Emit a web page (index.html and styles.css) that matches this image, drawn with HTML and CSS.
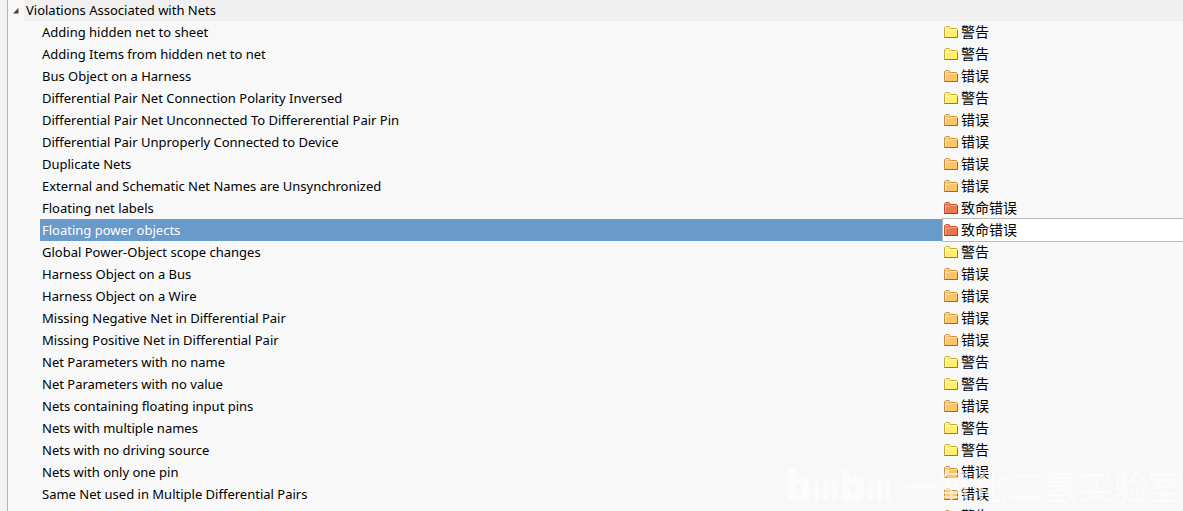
FILE: index.html
```html
<!DOCTYPE html>
<html lang="zh-CN">
<head>
    <meta charset="UTF-8">
    <meta name="viewport" content="width=device-width, initial-scale=1.0">
    <title>Error Reporting</title>
    <link rel="stylesheet" href="styles.css">
</head>
<body>
    <svg class="defs" width="0" height="0">
        <symbol id="folder" viewBox="0 0 14 12">
            <path class="body" d="M.5 11.500v-9.500l1.500-1.500h3l1.500 2h6l1 1v8z"/>
            <path class="shine" d="M1.500 10.500v-8M2 1.500h3M1.500 4.500h4l1-1h6"/>
            <path class="edge" d="M.5 11.500h13v-7"/>
        </symbol>
    </svg>
    <div class="panel">
        <table class="rules">
            <colgroup>
                <col class="col-toggle">
                <col>
                <col class="col-value">
            </colgroup>
            <thead>
                <tr>
                    <th class="toggle"><button type="button" aria-label="Collapse"><svg width="6" height="6" viewBox="0 0 6 6"><path d="M5.500 0v5.500h-5.500z"/></svg></button></th>
                    <th class="group" colspan="2">Violations Associated with Nets</th>
                </tr>
            </thead>
            <tbody id="list"></tbody>
        </table>
    </div>
    <div class="watermark">
        <span class="logo"><b>b</b>ili<b>b</b>ili</span>
        <span class="author">一氧化二氢实验室</span>
    </div>
    <script src="script.js"></script>
</body>
</html>
```
FILE: styles.css
```css
body{
    margin: 0;
    height: 100vh;
    overflow: hidden;
    background: #f3f3f3;
    color: #000;
    font: 13px/22px "Noto Sans", "Noto Sans CJK SC", sans-serif;
}
.defs{
    position: absolute;
}
.panel{
    min-height: 100vh;
    margin-left: 7px;
    border-left: 1px solid #b4b4b4;
    background: #f8f8f8;
}
.rules{
    width: 100%;
    table-layout: fixed;
    border-collapse: collapse;
}
.col-toggle{
    width: 16px;
}
.col-value{
    width: 240px;
}
.rules th,
.rules td{
    height: 22px;
    padding: 0;
    font-weight: normal;
    text-align: left;
    white-space: nowrap;
}
.rules thead th{
    height: 21px;
    line-height: 21px;
}
.rules .group{
    padding-left: 2px;
    background: #f0f0f0;
}
.toggle button{
    display: block;
    width: 16px;
    height: 20px;
    padding: 0 0 0 5px;
    border: 0;
    background: none;
}
.toggle svg{
    display: block;
    fill: #404040;
}
.rules .name{
    padding-left: 32px;
}
.name span{
    display: block;
    padding-left: 2px;
}
.level{
    display: flex;
    align-items: center;
    gap: 3px;
    height: 22px;
    padding-left: 1px;
    font-size: 14px;
}
.level svg{
    width: 14px;
    height: 12px;
}
.body{
    fill: var(--fill);
    stroke: var(--line);
}
.shine{
    fill: none;
    stroke: var(--shine);
}
.edge{
    fill: none;
    stroke: var(--edge);
}
.warning{
    --fill: #ffee70;
    --line: #c4ac2c;
    --shine: #fffab8;
    --edge: #98800c;
}
.error{
    --fill: #fbc468;
    --line: #c8903c;
    --shine: #ffe0a4;
    --edge: #a06c1c;
}
.fatal{
    --fill: #e87850;
    --line: #c4502c;
    --shine: #f6a888;
    --edge: #a83818;
}
.selected .name span{
    background: #689aca;
    color: #fff;
}
.selected .level{
    background: #fff;
    box-shadow: 0 0 0 1px #b8b8b8;
}
/* watermark in the corner, over the list */
.watermark{
    position: absolute;
    right: 0;
    bottom: 0;
    display: flex;
    align-items: center;
    gap: 10px;
    height: 48px;
    color: #fff;
    opacity: .6;
    pointer-events: none;
}
.logo{
    font: bold 30px/48px "Noto Sans", sans-serif;
}
.logo b{
    font-size: 42px;
}
.author{
    font-size: 35px;
    line-height: 48px;
}
```
FILE: script.js
```js
var levels = {
    warning: '警告',
    error: '错误',
    fatal: '致命错误'
}
var rules = [
    ['Adding hidden net to sheet', 'warning'],
    ['Adding Items from hidden net to net', 'warning'],
    ['Bus Object on a Harness', 'error'],
    ['Differential Pair Net Connection Polarity Inversed', 'warning'],
    ['Differential Pair Net Unconnected To Differerential Pair Pin', 'error'],
    ['Differential Pair Unproperly Connected to Device', 'error'],
    ['Duplicate Nets', 'error'],
    ['External and Schematic Net Names are Unsynchronized', 'error'],
    ['Floating net labels', 'fatal'],
    ['Floating power objects', 'fatal'],
    ['Global Power-Object scope changes', 'warning'],
    ['Harness Object on a Bus', 'error'],
    ['Harness Object on a Wire', 'error'],
    ['Missing Negative Net in Differential Pair', 'error'],
    ['Missing Positive Net in Differential Pair', 'error'],
    ['Net Parameters with no name', 'warning'],
    ['Net Parameters with no value', 'warning'],
    ['Nets containing floating input pins', 'error'],
    ['Nets with multiple names', 'warning'],
    ['Nets with no driving source', 'warning'],
    ['Nets with only one pin', 'error'],
    ['Same Net used in Multiple Differential Pairs', 'error'],
    ['', 'warning']
]
var html = ''
for(var i=0;i<rules.length;i++){
    html += '<tr class="' + (i===9 ? 'selected' : '') + '">' +
        '<td class="name" colspan="2"><span>' + rules[i][0] + '</span></td>' +
        '<td><div class="level ' + rules[i][1] + '">' +
        '<svg><use href="#folder"/></svg>' + levels[rules[i][1]] + '</div></td></tr>'
}
document.getElementById('list').innerHTML = html
```
